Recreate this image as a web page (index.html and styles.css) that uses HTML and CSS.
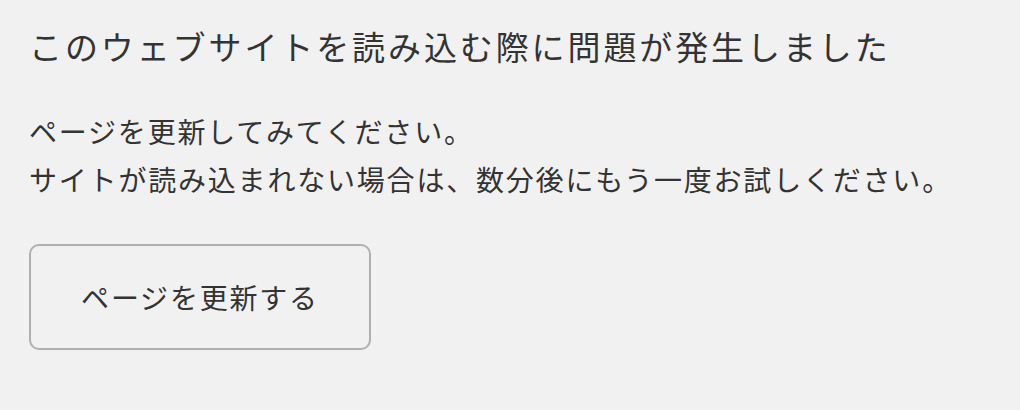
FILE: index.html
```html
<!DOCTYPE html>
<html lang="ja">
<head>
  <meta charset="UTF-8">
  <title>エラー</title>
  <link rel="stylesheet" href="styles.css">
</head>
<body>

<!-- エラー表示 -->
<div class="error-page">
  <h1 class="error-title">このウェブサイトを読み込む際に問題が発生しました</h1>
  <p class="error-text">ページを更新してみてください。<br>サイトが読み込まれない場合は、数分後にもう一度お試しください。</p>
  <button class="reload-btn" onclick="location.reload()">ページを更新する</button>
</div>

</body>
</html>
```

FILE: styles.css
```css
html, body { margin: 0; background: #f1f1f1; }
body {
  font-family: "Noto Sans CJK JP", "Noto Sans", sans-serif;
  color: #333;
}
.error-page { padding: 22px 29px; }
.error-title {
  margin: 0;
  font-size: 33px;
  font-weight: normal;
  line-height: 48px;
  letter-spacing: 2.9px;
}
.error-text {
  margin: 37px 0 0;
  font-size: 28px;
  line-height: 48px;
  letter-spacing: 1.8px;
}
.reload-btn {
  display: block;
  margin-top: 41px;
  width: 342px;
  height: 106px;
  background: transparent;
  border: 2px solid #b0b0b0;
  border-radius: 10px;
  font-family: inherit;
  font-size: 28px;
  letter-spacing: 1.8px;
  color: #333;
  cursor: pointer;
}
```
